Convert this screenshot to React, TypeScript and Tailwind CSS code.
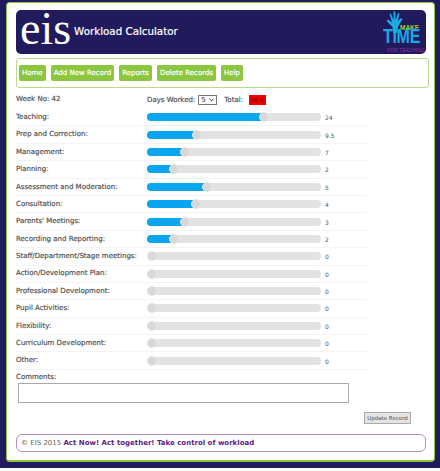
import React from 'react';

const rows = [
  { label: 'Teaching:', value: '24', pos: 117 },
  { label: 'Prep and Correction:', value: '9.5', pos: 50 },
  { label: 'Management:', value: '7', pos: 38 },
  { label: 'Planning:', value: '2', pos: 27 },
  { label: 'Assessment and Moderation:', value: '5', pos: 60 },
  { label: 'Consultation:', value: '4', pos: 49 },
  { label: "Parents' Meetings:", value: '3', pos: 38 },
  { label: 'Recording and Reporting:', value: '2', pos: 27 },
  { label: 'Staff/Department/Stage meetings:', value: '0', pos: 5 },
  { label: 'Action/Development Plan:', value: '0', pos: 5 },
  { label: 'Professional Development:', value: '0', pos: 5 },
  { label: 'Pupil Activities:', value: '0', pos: 5 },
  { label: 'Flexibility:', value: '0', pos: 5 },
  { label: 'Curriculum Development:', value: '0', pos: 5 },
  { label: 'Other:', value: '0', pos: 5 },
];

const navItems = ['Home', 'Add New Record', 'Reports', 'Delete Records', 'Help'];

function MakeTimeLogo() {
  return (
    <div className="relative w-[38px] h-[43px] shrink-0 font-['Liberation_Sans',sans-serif]">
      <svg viewBox="0 0 38 43" className="absolute left-0 top-0 w-[38px] h-[43px]">
        <path
          d="M10 22 L9.5 16 L3.5 10 L5 8.5 L9 11.5 L6.5 3 L8 2.5 L10.5 9 L10.5 0.5 L12.2 0.5 L12.7 9 L15 2 L16.5 2.5 L15 10 L18 7 L19.5 8 L15 16 L14 22 Z"
          fill="#1ba9e1"
        />
      </svg>
      <span className="absolute left-[17px] top-[15.5px] text-[6.5px] leading-[3px] font-bold text-[#a6ce39]">MAKE</span>
      <span className="absolute left-0 top-[18.6px] text-[16px] leading-[12px] tracking-[-0.3px] font-bold text-[#1ba9e1] scale-y-[1.3] origin-top">TIME</span>
      <span className="absolute left-[4px] top-[36px] text-[5px] leading-[6px] whitespace-nowrap text-[#8e2f9c]">FOR TEACHING</span>
    </div>
  );
}

function SliderRow({ label, value, pos }: { label: string; value: string; pos: number }) {
  return (
    <div className="flex items-center h-[17.4px] w-[350px] border-b border-[#f4f4f4]">
      <div className="w-[131px] shrink-0 text-[7px] text-[#555] [-webkit-text-stroke:0.2px_#555] whitespace-nowrap">{label}</div>
      <div className="relative w-[174px] h-[8px] shrink-0 rounded-full bg-[#e2e2e2]">
        <div className="h-[8px] rounded-full bg-[#0aa5ef]" style={{ width: value === '0' ? 0 : pos }} />
        <div
          className="absolute top-[-1px] w-[10px] h-[10px] -ml-[5px] rounded-full bg-[#d8d8d8] border border-[#e6e6e6]"
          style={{ left: pos }}
        />
      </div>
      <div className="ml-[4px] mt-[1px] text-[6px] text-[#555]">{value}</div>
    </div>
  );
}

export default function App() {
  return (
    <div className="w-[440px] h-[471px] bg-white font-['DejaVu_Sans',sans-serif]">
      <div className="h-[468px] bg-[#211a5c] pl-[6px] pr-[5px] pt-[2px]">
        <div className="h-[460px] rounded-[4px] bg-white border border-[#8cc63f] border-b-2 px-[9px] pt-[7px]">
          <div className="flex items-center justify-between h-[44px] w-[410px] rounded-[5px] bg-[#211a5c] pl-[4px] pr-[5px]">
            <div className="flex items-center">
              <span className="text-[46px] leading-[40px] -mt-[6px] text-white font-['Liberation_Serif',serif]">eis</span>
              <span className="ml-[3px] text-[10.3px] text-white [-webkit-text-stroke:0.2px_#fff] whitespace-nowrap">Workload Calculator</span>
            </div>
            <MakeTimeLogo />
          </div>

          <div className="flex items-center gap-[5px] mt-[4px] h-[30px] w-[413px] rounded-[3px] border border-[#b9dc8c] pl-[2px]">
            {navItems.map((item) => (
              <div key={item} className="h-[16px] px-[3px] flex items-center rounded-[2px] bg-[#8cc63f] text-[7px] text-white [-webkit-text-stroke:0.2px_#fff] whitespace-nowrap">
                {item}
              </div>
            ))}
          </div>

          <div className="flex items-center h-[18px] mt-[3px] text-[7px] text-[#555] [-webkit-text-stroke:0.2px_#555]">
            <div className="w-[131px] mb-[2px]">Week No: 42</div>
            <span>Days Worked:</span>
            <div className="ml-[3px] flex items-center justify-between w-[19px] h-[10px] border border-[#777] px-[2px] text-[7px] text-[#333] [-webkit-text-stroke:0px]">
              5
              <svg viewBox="0 0 6 4" className="w-[5px] h-[4px]">
                <path d="M0.5 0.5 L3 3 L5.5 0.5" fill="none" stroke="#222" strokeWidth="1.2" />
              </svg>
            </div>
            <span className="ml-[7px]">Total:</span>
            <div className="ml-[6px] w-[17px] h-[10px] bg-[#f00000] text-[6px] leading-[10px] text-[#6a1010] [-webkit-text-stroke:0px] pl-[1px]">56.5</div>
          </div>

          <div className="w-[350px]">
            {rows.map((row) => (
              <SliderRow key={row.label} label={row.label} value={row.value} pos={row.pos} />
            ))}
          </div>

          <div className="mt-[2px] text-[7px] leading-[10px] text-[#555] [-webkit-text-stroke:0.2px_#555]">Comments:</div>
          <div className="mt-[1px] ml-[2px] w-[331px] h-[20px] border border-[#aaa] bg-white" />

          <div className="flex justify-end w-[395px] mt-[9px]">
            <div className="w-[47px] h-[12px] flex items-center justify-center border border-[#aaa] bg-[#e4e4e4] text-[5.5px] text-[#555] whitespace-nowrap">
              Update Record
            </div>
          </div>

          <div className="flex items-center mt-[10px] h-[18px] w-[410px] rounded-[6px] border border-[#b98cc6] pl-[4px] text-[7px] whitespace-nowrap">
            <span className="text-[#666]">© EIS 2015&nbsp;</span>
            <span className="font-bold text-[#5f1a82]">Act Now! Act together! Take control of workload</span>
          </div>
        </div>
      </div>
    </div>
  );
}
